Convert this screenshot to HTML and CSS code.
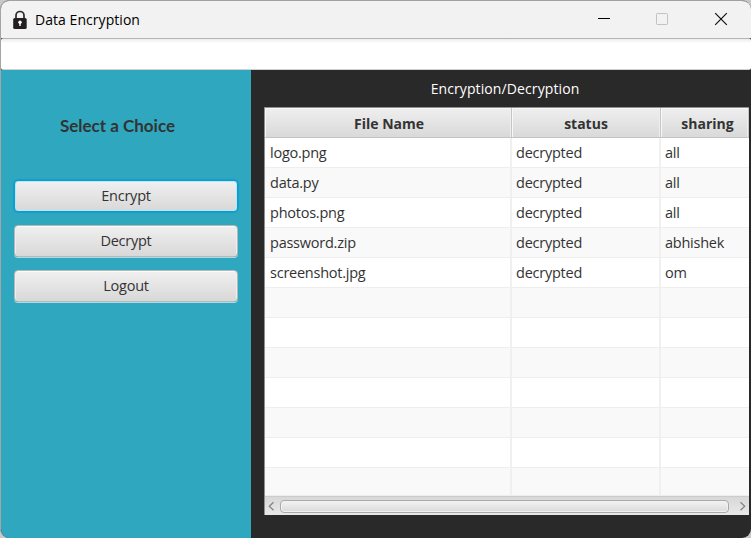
FILE: index.html
```html
<!DOCTYPE html>
<html lang="en">
<head>
<meta charset="utf-8">
<title>Data Encryption</title>
<link rel="stylesheet" href="styles.css">
</head>
<body>
<div class="window">
  <header class="titlebar">
    <svg class="lock" width="16" height="20" viewBox="0 0 16 20"><path d="M4 9V5.5a4 4 0 0 1 8 0V9" fill="none" stroke="#2b292b" stroke-width="1.7"/><rect x="1.2" y="8" width="13.5" height="11" rx="1.5" fill="#231f20"/><circle cx="8" cy="12.2" r="1.7" fill="#fff"/><path d="M7.3 12h1.4v4H7.3z" fill="#fff"/></svg>
    <h1 class="title"><span>Data Encryption</span></h1>
    <div class="controls">
      <svg width="58" height="37" viewBox="0 0 58 37"><path d="M23 17.5h12" stroke="#000"/></svg>
      <svg width="58" height="37" viewBox="0 0 58 37"><rect x="23.5" y="12.5" width="11" height="11" rx=".8" fill="none" stroke="#c2c2c2"/></svg>
      <svg width="58" height="37" viewBox="0 0 58 37"><path d="M24.2 12.2l11.6 11.6M35.8 12.2L24.2 23.8" stroke="#111" stroke-width="1.2"/></svg>
    </div>
  </header>
  <div class="menubar"></div>
  <main class="body">
    <aside class="sidebar">
      <h2 class="choice"><span>Select a Choice</span></h2>
      <button class="btn focused"><span>Encrypt</span></button>
      <button class="btn"><span>Decrypt</span></button>
      <button class="btn"><span>Logout</span></button>
    </aside>
    <section class="content">
      <h2 class="heading"><span>Encryption/Decryption</span></h2>
      <div class="table">
        <div class="row head"><div><span>File Name</span></div><div><span>status</span></div><div><span>sharing</span></div></div>
        <div class="row"><div><span>logo.png</span></div><div><span>decrypted</span></div><div><span>all</span></div></div>
        <div class="row"><div><span>data.py</span></div><div><span>decrypted</span></div><div><span>all</span></div></div>
        <div class="row"><div><span>photos.png</span></div><div><span>decrypted</span></div><div><span>all</span></div></div>
        <div class="row"><div><span>password.zip</span></div><div><span>decrypted</span></div><div><span>abhishek</span></div></div>
        <div class="row"><div><span>screenshot.jpg</span></div><div><span>decrypted</span></div><div><span>om</span></div></div>
        <div class="row"><div></div><div></div><div></div></div>
        <div class="row"><div></div><div></div><div></div></div>
        <div class="row"><div></div><div></div><div></div></div>
        <div class="row"><div></div><div></div><div></div></div>
        <div class="row"><div></div><div></div><div></div></div>
        <div class="row"><div></div><div></div><div></div></div>
        <div class="row last"><div></div><div></div><div></div></div>
        <div class="scrollbar">
          <svg width="15" height="18" viewBox="0 0 15 18"><path d="M8.5 5.2L4.3 9.2l4.2 4" fill="none" stroke="#858585" stroke-width="1.3"/></svg>
          <div class="thumb"></div>
          <svg width="20" height="18" viewBox="0 0 20 18"><path d="M11.5 5.2l4.2 4-4.2 4" fill="none" stroke="#858585" stroke-width="1.3"/></svg>
        </div>
      </div>
    </section>
  </main>
</div>
</body>
</html>
```
FILE: styles.css
```css
* { box-sizing: border-box; }
body {
  margin: 0;
  height: 538px;
  overflow: hidden;
  background: #c9c7ca;
  font: 14.5px/20px "Open Sans", "Noto Sans", sans-serif;
  color: #333;
}
h1, h2 { margin: 0; font: inherit; }
.window {
  width: 751px;
  height: 538px;
  display: flex;
  flex-direction: column;
  overflow: hidden;
  border-top: 1px solid #a19fa5;
  border-left: 1px solid #a5a5a8;
  border-radius: 9px;
  background: #292929;
}
.titlebar {
  height: 37px;
  display: flex;
  align-items: center;
  background: #f2f2f2;
  padding: 0 2px 0 11px;
}
.lock { flex: none; }
.title { margin-left: 7px; color: #000; font-size: 14px; letter-spacing: .05px; }
.controls { display: flex; margin-left: auto; }
.menubar {
  height: 32px;
  border-top: 1px solid #b5b5b5;
  border-bottom: 1px solid #d0d0d0;
  border-radius: 2px;
  background: linear-gradient(#ececec, #fff 4px);
}
.body { flex: 1; display: flex; min-height: 0; }
.sidebar {
  width: 250px;
  padding: 45px 13px 0;
  background: #2fa7bf;
  display: flex;
  flex-direction: column;
}
.choice {
  height: 22px;
  margin: 0 17px 43px 0;
  text-align: center;
  font: bold 17px/22px Lato, sans-serif;
}
.btn {
  height: 32px;
  margin: 0 0 13px;
  padding: 0;
  border: 1px solid #b5b9ba;
  border-radius: 4px;
  background: linear-gradient(#f0f0f0, #d8d8d8);
  box-shadow: inset 0 1px #fafafa, inset 1px 0 #eee, inset -1px 0 #eee, 0 1px #a9dbe5;
  color: #333;
  font: inherit;
  letter-spacing: -.25px;
}
.focused {
  border-color: #039ed3;
  box-shadow: inset 0 0 0 1px #c3e4ef, 0 0 0 .5px #039ed3, 0 0 2px #039ed3;
}
.content { flex: 1; min-width: 0; padding: 9px 2px 0 13px; }
.heading {
  height: 20px;
  margin-bottom: 8px;
  padding-right: 3px;
  text-align: center;
  color: #fff;
  font-size: 14px;
  letter-spacing: .1px;
}
.table { border: solid #8f8f8f; border-width: 1px 0 0 1px; background: #fff; }
.row { display: grid; grid-template-columns: 247px 149px 1fr; height: 30px; }
.row > div {
  padding: 5px 0 0 4px;
  border-right: 2px solid #f0f0f0;
  border-bottom: 1px solid #eee;
  overflow: hidden;
  white-space: nowrap;
  letter-spacing: -.24px;
}
.row > div:first-child { padding-left: 5px; }
.row > div:last-child { border-right: 0; }
.row:nth-child(odd) { background: #f9f9f9; }
.row.head > div {
  padding: 6px 0 0;
  text-align: center;
  font-weight: bold;
  font-size: 14px;
  letter-spacing: 0;
  background: linear-gradient(#efefef, #d9d9d9);
  border-right: 1px solid #c5c5c5;
  border-bottom: 1px solid #c3c3c3;
  box-shadow: inset 1px 1px #f8f8f8, inset -1px 0 #eee;
}
.row.head > div:first-child { padding-left: 2px; }
.row.head > div:last-child { padding-left: 6px; }
.last { height: 28px; }
.scrollbar {
  height: 19px;
  display: flex;
  align-items: center;
  background: linear-gradient(#d8d8d8, #e9e9e9);
  border-top: 1px solid #ccc;
}
.thumb {
  flex: 1;
  height: 13px;
  border: 1px solid #aaa;
  border-radius: 4px;
  background: linear-gradient(#f3f3f3, #dadada);
  box-shadow: inset 0 0 0 1px #f1f1f1;
}
```
